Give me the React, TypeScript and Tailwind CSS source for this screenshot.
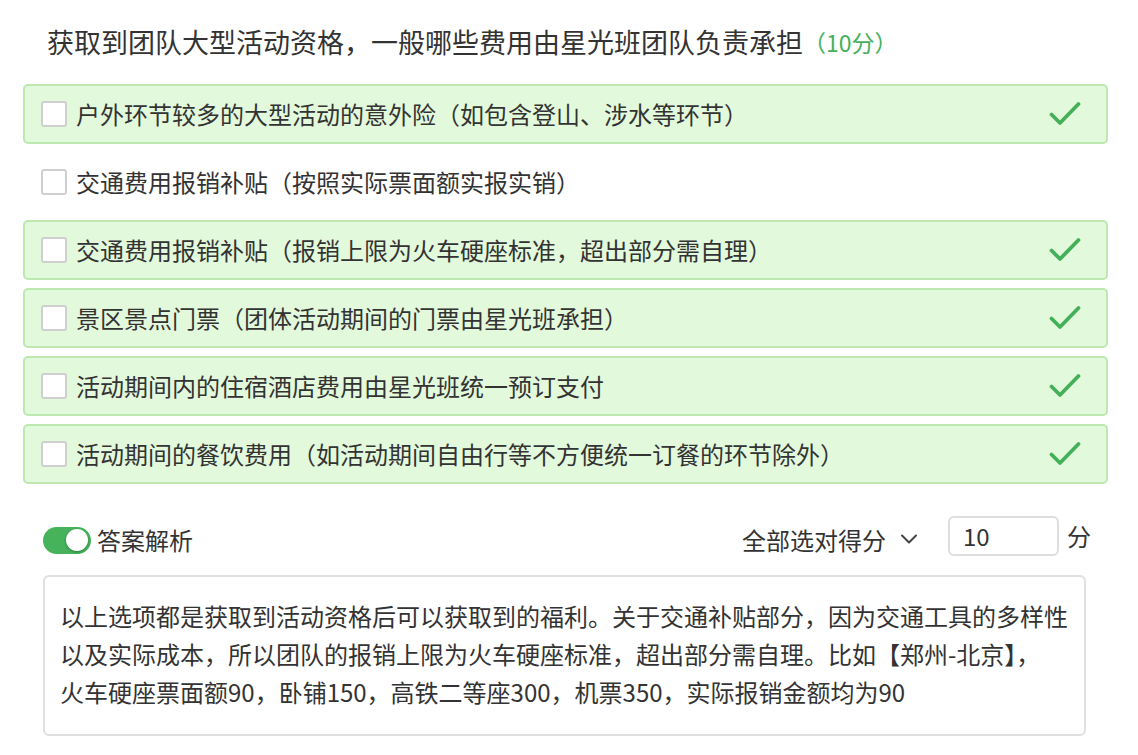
import React from "react";

const options = [
  { text: "户外环节较多的大型活动的意外险（如包含登山、涉水等环节）", correct: true },
  { text: "交通费用报销补贴（按照实际票面额实报实销）", correct: false },
  { text: "交通费用报销补贴（报销上限为火车硬座标准，超出部分需自理）", correct: true },
  { text: "景区景点门票（团体活动期间的门票由星光班承担）", correct: true },
  { text: "活动期间内的住宿酒店费用由星光班统一预订支付", correct: true },
  { text: "活动期间的餐饮费用（如活动期间自由行等不方便统一订餐的环节除外）", correct: true },
];

function Check() {
  return (
    <svg width="32" height="26" viewBox="0 0 32 26" fill="none">
      <path d="M2.5 13.5 L11 22 L29.5 3" stroke="#45b05a" strokeWidth="3.8" strokeLinecap="round" strokeLinejoin="round" />
    </svg>
  );
}

export default function App() {
  return (
    <div
      className="w-[1138px] h-[755px] bg-white pl-[23px] pt-[24px] text-[#333333] overflow-hidden"
      style={{ fontFamily: '"Noto Sans CJK SC", "Noto Sans", sans-serif' }}
    >
      <div className="ml-[24px] h-[36px] flex items-center text-[27px] leading-[36px] whitespace-nowrap">
        <span>获取到团队大型活动资格，一般哪些费用由星光班团队负责承担</span>
        <span className="text-[23px] text-[#45b05a]">（10分）</span>
      </div>

      <div className="mt-[24px] w-[1085px] flex flex-col gap-[8px]">
        {options.map((o, i) => (
          <div
            key={i}
            className={
              o.correct
                ? "h-[60px] flex items-center pl-[16px] pr-[25px] border-2 border-[#bde8b0] bg-[#e3f9dc] rounded-[5px]"
                : "h-[60px] flex items-center pl-[16px] pr-[25px] border-2 border-transparent rounded-[5px]"
            }
          >
            <div className="w-[26px] h-[26px] border-2 border-[#cfcfcf] rounded-[3px] bg-white shrink-0" />
            <span className="ml-[9px] text-[24px] leading-[30px] whitespace-nowrap flex-1">{o.text}</span>
            {o.correct && <Check />}
          </div>
        ))}
      </div>

      <div className="mt-[32px] ml-[20px] w-[1048px] h-[40px] flex items-center justify-between">
        <div className="flex items-center mt-[8px]">
          <div className="relative w-[48px] h-[27px] rounded-full bg-[#46b35b]">
            <div className="absolute right-[3px] top-[2.5px] w-[22px] h-[22px] rounded-full bg-white shadow-[0_1px_3px_rgba(0,0,0,0.3)]" />
          </div>
          <span className="ml-[6px] text-[24px] leading-[30px]">答案解析</span>
        </div>
        <div className="flex items-center">
          <span className="text-[24px] leading-[30px] mt-[8px]">全部选对得分</span>
          <svg className="ml-[14px] mt-[6px]" width="18" height="12" viewBox="0 0 18 12" fill="none">
            <path d="M2 2.5 L9 9.5 L16 2.5" stroke="#444" strokeWidth="2" strokeLinecap="round" strokeLinejoin="round" />
          </svg>
          <div className="ml-[30px] w-[111px] h-[40px] border-2 border-[#dedede] rounded-[6px] flex items-center pl-[13px] text-[24px]">
            10
          </div>
          <span className="ml-[8px] text-[24px] leading-[30px]">分</span>
        </div>
      </div>

      <div className="mt-[19px] ml-[20px] w-[1043px] h-[161px] border-2 border-[#e0e0e0] rounded-[6px] pl-[15px] pt-[20px] text-[24px] leading-[38px] whitespace-nowrap">
        <div>以上选项都是获取到活动资格后可以获取到的福利。关于交通补贴部分，因为交通工具的多样性</div>
        <div>以及实际成本，所以团队的报销上限为火车硬座标准，超出部分需自理。比如【郑州-北京】，</div>
        <div>火车硬座票面额90，卧铺150，高铁二等座300，机票350，实际报销金额均为90</div>
      </div>
    </div>
  );
}
